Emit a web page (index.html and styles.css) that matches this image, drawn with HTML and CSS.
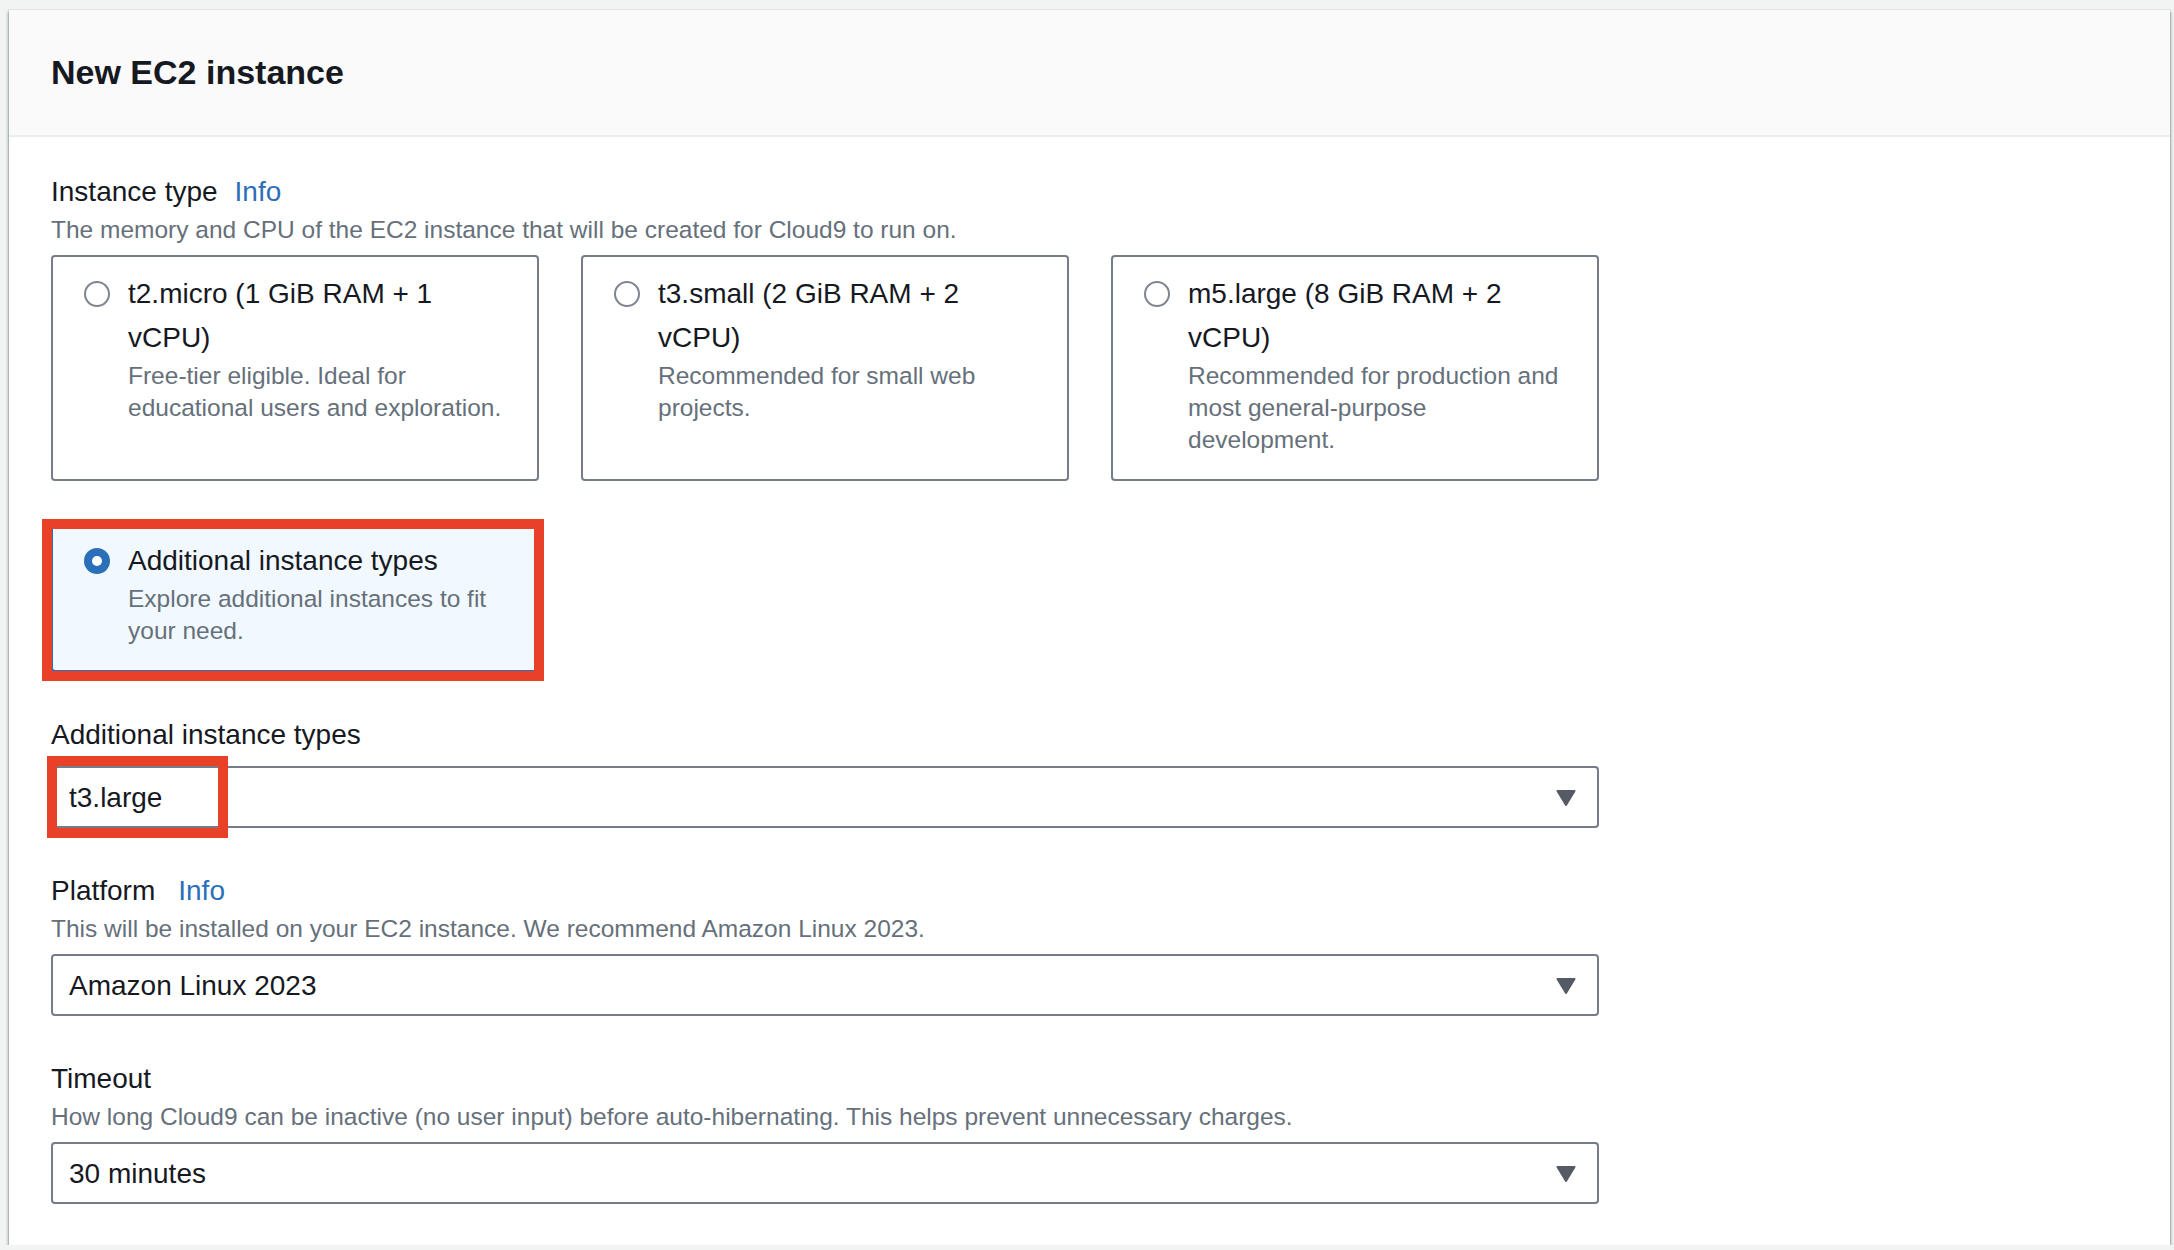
FILE: index.html
```html
<!DOCTYPE html>
<html lang="en">
<head>
<meta charset="utf-8">
<title>New EC2 instance</title>
<link rel="stylesheet" href="styles.css">
</head>
<body>
<section class="container">
  <header class="container-header">
    <h2 class="title">New EC2 instance</h2>
  </header>
  <div class="container-body">
    <div class="field">
      <div class="label">Instance type<a class="info" href="#">Info</a></div>
      <div class="desc">The memory and CPU of the EC2 instance that will be created for Cloud9 to run on.</div>
      <div class="control tiles">
        <div class="tile">
          <svg class="radio" viewBox="0 0 26 26" width="26" height="26"><circle cx="13" cy="13" r="12" fill="#fff" stroke="#7d8590" stroke-width="2"/></svg>
          <div class="tile-text">
            <div class="tile-title">t2.micro (1 GiB RAM + 1 vCPU)</div>
            <div class="tile-desc">Free-tier eligible. Ideal for educational users and exploration.</div>
          </div>
        </div>
        <div class="tile">
          <svg class="radio" viewBox="0 0 26 26" width="26" height="26"><circle cx="13" cy="13" r="12" fill="#fff" stroke="#7d8590" stroke-width="2"/></svg>
          <div class="tile-text">
            <div class="tile-title">t3.small (2 GiB RAM + 2 vCPU)</div>
            <div class="tile-desc">Recommended for small web projects.</div>
          </div>
        </div>
        <div class="tile">
          <svg class="radio" viewBox="0 0 26 26" width="26" height="26"><circle cx="13" cy="13" r="12" fill="#fff" stroke="#7d8590" stroke-width="2"/></svg>
          <div class="tile-text">
            <div class="tile-title">m5.large (8 GiB RAM + 2 vCPU)</div>
            <div class="tile-desc">Recommended for production and most general-purpose development.</div>
          </div>
        </div>
        <div class="tile tile-selected">
          <svg class="radio" viewBox="0 0 26 26" width="26" height="26"><circle cx="13" cy="13" r="13" fill="#2b6fb8"/><circle cx="13" cy="13" r="5" fill="#fff"/></svg>
          <div class="tile-text">
            <div class="tile-title">Additional instance types</div>
            <div class="tile-desc">Explore additional instances to fit your need.</div>
          </div>
          <span class="mark mark-tile"></span>
        </div>
      </div>
    </div>

    <div class="field">
      <div class="label">Additional instance types</div>
      <div class="control select">
        <span class="select-value">t3.large</span>
        <svg class="caret" viewBox="0 0 20 16" width="20" height="16"><path d="M1.5 1 H18.5 L10 15 Z" fill="#545b64" stroke="#545b64" stroke-width="2" stroke-linejoin="round"/></svg>
        <span class="mark mark-value"></span>
      </div>
    </div>

    <div class="field">
      <div class="label">Platform<a class="info info-platform" href="#">Info</a></div>
      <div class="desc">This will be installed on your EC2 instance. We recommend Amazon Linux 2023.</div>
      <div class="control select">
        <span class="select-value">Amazon Linux 2023</span>
        <svg class="caret" viewBox="0 0 20 16" width="20" height="16"><path d="M1.5 1 H18.5 L10 15 Z" fill="#545b64" stroke="#545b64" stroke-width="2" stroke-linejoin="round"/></svg>
      </div>
    </div>

    <div class="field">
      <div class="label">Timeout</div>
      <div class="desc">How long Cloud9 can be inactive (no user input) before auto-hibernating. This helps prevent unnecessary charges.</div>
      <div class="control select">
        <span class="select-value">30 minutes</span>
        <svg class="caret" viewBox="0 0 20 16" width="20" height="16"><path d="M1.5 1 H18.5 L10 15 Z" fill="#545b64" stroke="#545b64" stroke-width="2" stroke-linejoin="round"/></svg>
      </div>
    </div>
  </div>
</section>
</body>
</html>
```

FILE: styles.css
```css
* {
  box-sizing: border-box;
}

html, body {
  margin: 0;
  padding: 0;
}

body {
  background: #f2f3f3;
  padding: 10px 4px 0 9px;
  font-family: "Liberation Sans", Arial, sans-serif;
  color: #16191f;
  -webkit-font-smoothing: antialiased;
}

.container {
  background: #ffffff;
  box-shadow: 0 0 0 1px rgba(0, 28, 36, 0.07),
              0 2px 2px 0 rgba(0, 28, 36, 0.3),
              2px 2px 2px 0 rgba(0, 28, 36, 0.15),
              -2px 2px 2px 0 rgba(0, 28, 36, 0.15);
}

.container-header {
  background: #fafafa;
  border-bottom: 2px solid #eaeded;
  padding: 40px 42px 41px 42px;
}

.title {
  margin: 0;
  font-size: 34px;
  line-height: 44px;
  font-weight: 700;
  color: #16191f;
}

.container-body {
  padding: 33px 42px 41px 42px;
  display: flex;
  flex-direction: column;
  gap: 41px;
}

.field {
  width: 1548px;
  display: flex;
  flex-direction: column;
}

.label {
  font-size: 28px;
  line-height: 44px;
  color: #16191f;
}

.info {
  margin-left: 17px;
  color: #2b6fb8;
  text-decoration: none;
}

.info-platform {
  margin-left: 23px;
}

.desc {
  font-size: 24.5px;
  line-height: 32px;
  color: #66707b;
}

.control {
  margin-top: 9px;
}

.tiles {
  display: grid;
  grid-template-columns: repeat(3, 488px);
  column-gap: 42px;
  row-gap: 41px;
}

.tile {
  position: relative;
  display: flex;
  align-items: flex-start;
  gap: 18px;
  border: 2px solid #747d89;
  border-radius: 4px;
  padding: 15px 28px 23px 31px;
  background: #ffffff;
}

.tile-selected {
  background: #f1f8fe;
  border-color: #2b6fb8;
}

.radio {
  flex: none;
  display: block;
  margin-top: 9px;
}

.tile-text {
  flex: 1;
  min-width: 0;
}

.tile-title {
  font-size: 28px;
  line-height: 44px;
  color: #16191f;
}

.tile-desc {
  font-size: 24.5px;
  line-height: 32px;
  color: #66707b;
}

.select {
  position: relative;
  height: 62px;
  border: 2px solid #747d89;
  border-radius: 4px;
  background: #ffffff;
  display: flex;
  align-items: center;
  justify-content: space-between;
  padding: 2px 21px 0 16px;
}

.select-value {
  font-size: 28px;
  line-height: 44px;
  color: #16191f;
}

.caret {
  display: block;
  flex: none;
}

.mark {
  position: absolute;
  border: 10px solid #e84127;
  pointer-events: none;
}

.mark-tile {
  top: -5px;
  left: -11px;
  width: 502px;
  height: 162px;
}

.mark-value {
  top: -12px;
  left: -6px;
  width: 181px;
  height: 82px;
}
```
